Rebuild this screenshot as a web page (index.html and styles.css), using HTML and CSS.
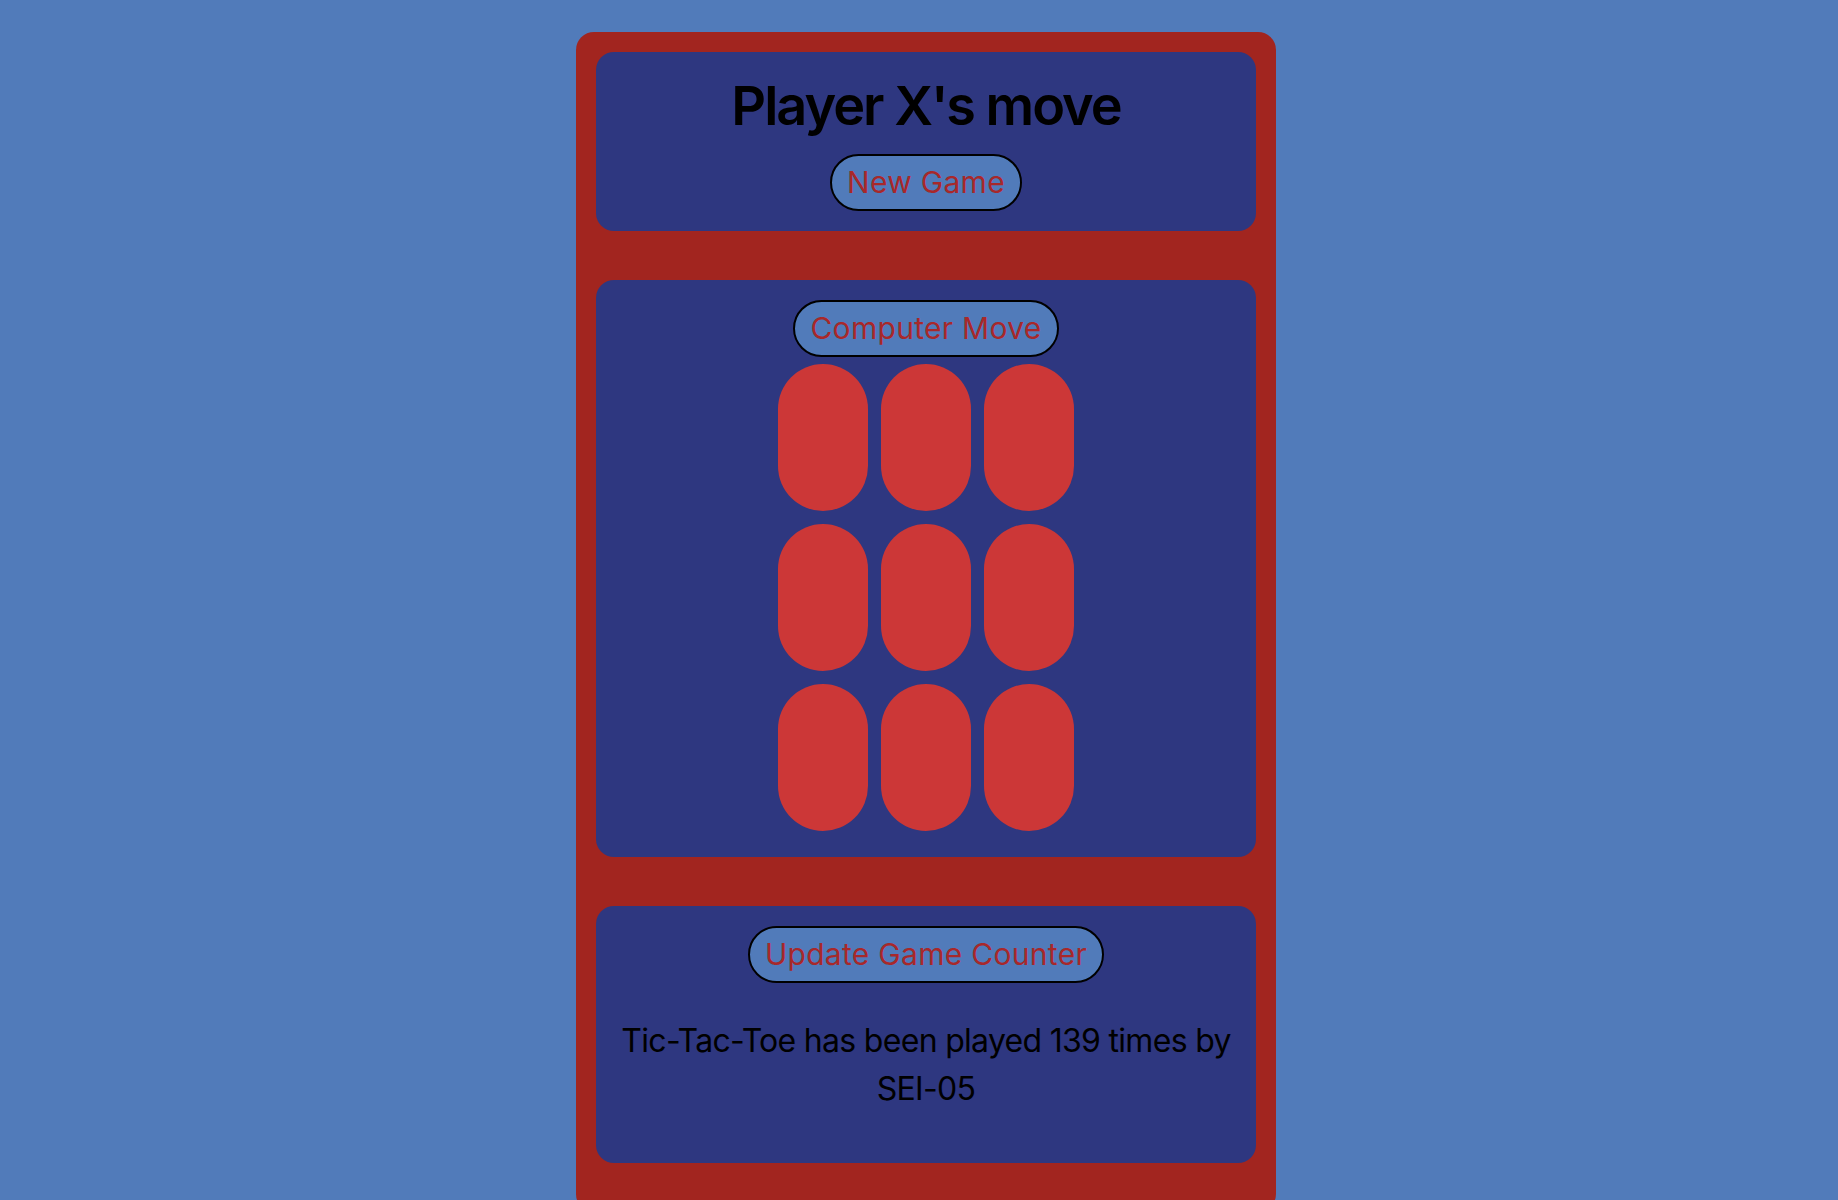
FILE: index.html
```html
<!DOCTYPE html>
<html lang="en">
<head>
    <meta charset="UTF-8">
    <meta name="viewport" content="width=device-width, initial-scale=1.0">
    <title>Tic-Tac-Toe</title>
    <link rel="stylesheet" href="styles.css">
</head>
<body>
    <div class="page">
        <div class="container">
            <div class="card header">
                <h1 id="status">Player X's move</h1>
                <button id="new-game">New Game</button>
            </div>
            <div class="card game">
                <button id="computer-move">Computer Move</button>
                <div id="board" class="board">
                    <div class="cell" data-cell></div>
                    <div class="cell" data-cell></div>
                    <div class="cell" data-cell></div>
                    <div class="cell" data-cell></div>
                    <div class="cell" data-cell></div>
                    <div class="cell" data-cell></div>
                    <div class="cell" data-cell></div>
                    <div class="cell" data-cell></div>
                    <div class="cell" data-cell></div>
                </div>
            </div>
            <div class="card counter">
                <button id="update-counter">Update Game Counter</button>
                <p class="count">Tic-Tac-Toe has been played 139 times by SEI-05</p>
            </div>
        </div>
    </div>
</body>
</html>
```

FILE: styles.css
```css
body {
    margin: 0;
    background: #517bba;
    font-family: Inter, "Liberation Sans", sans-serif;
    color: #000;
}

.page {
    padding: 32px 0 0 14px;
}

.container {
    box-sizing: border-box;
    width: 700px;
    margin: 0 auto;
    padding: 20px 20px 49px;
    background: #a2251f;
    border-radius: 18px;
    display: flex;
    flex-direction: column;
    gap: 49px;
}

.card {
    background: #2e3780;
    border-radius: 18px;
    padding: 20px;
    display: flex;
    flex-direction: column;
    align-items: center;
    text-align: center;
}

h1 {
    margin: 0 0 14px;
    font-size: 54px;
    font-weight: 600;
    letter-spacing: -2px;
    line-height: 68px;
}

button {
    font-family: Inter, "Liberation Sans", sans-serif;
    font-size: 30px;
    letter-spacing: 0.3px;
    line-height: 37px;
    padding: 8px 15px;
    color: #a8282a;
    background: #517bba;
    border: 2px solid #000;
    border-radius: 30px;
    cursor: pointer;
}

.game button {
    margin-bottom: 7px;
}

.board {
    display: grid;
    grid-template-columns: repeat(3, 90px);
    grid-auto-rows: 147px;
    gap: 13px;
    margin-bottom: 6px;
}

.cell {
    background: #cc3737;
    border-radius: 45px;
}

.count {
    margin: 34px 0 30px;
    font-size: 32px;
    letter-spacing: -0.7px;
    line-height: 48px;
}
```
